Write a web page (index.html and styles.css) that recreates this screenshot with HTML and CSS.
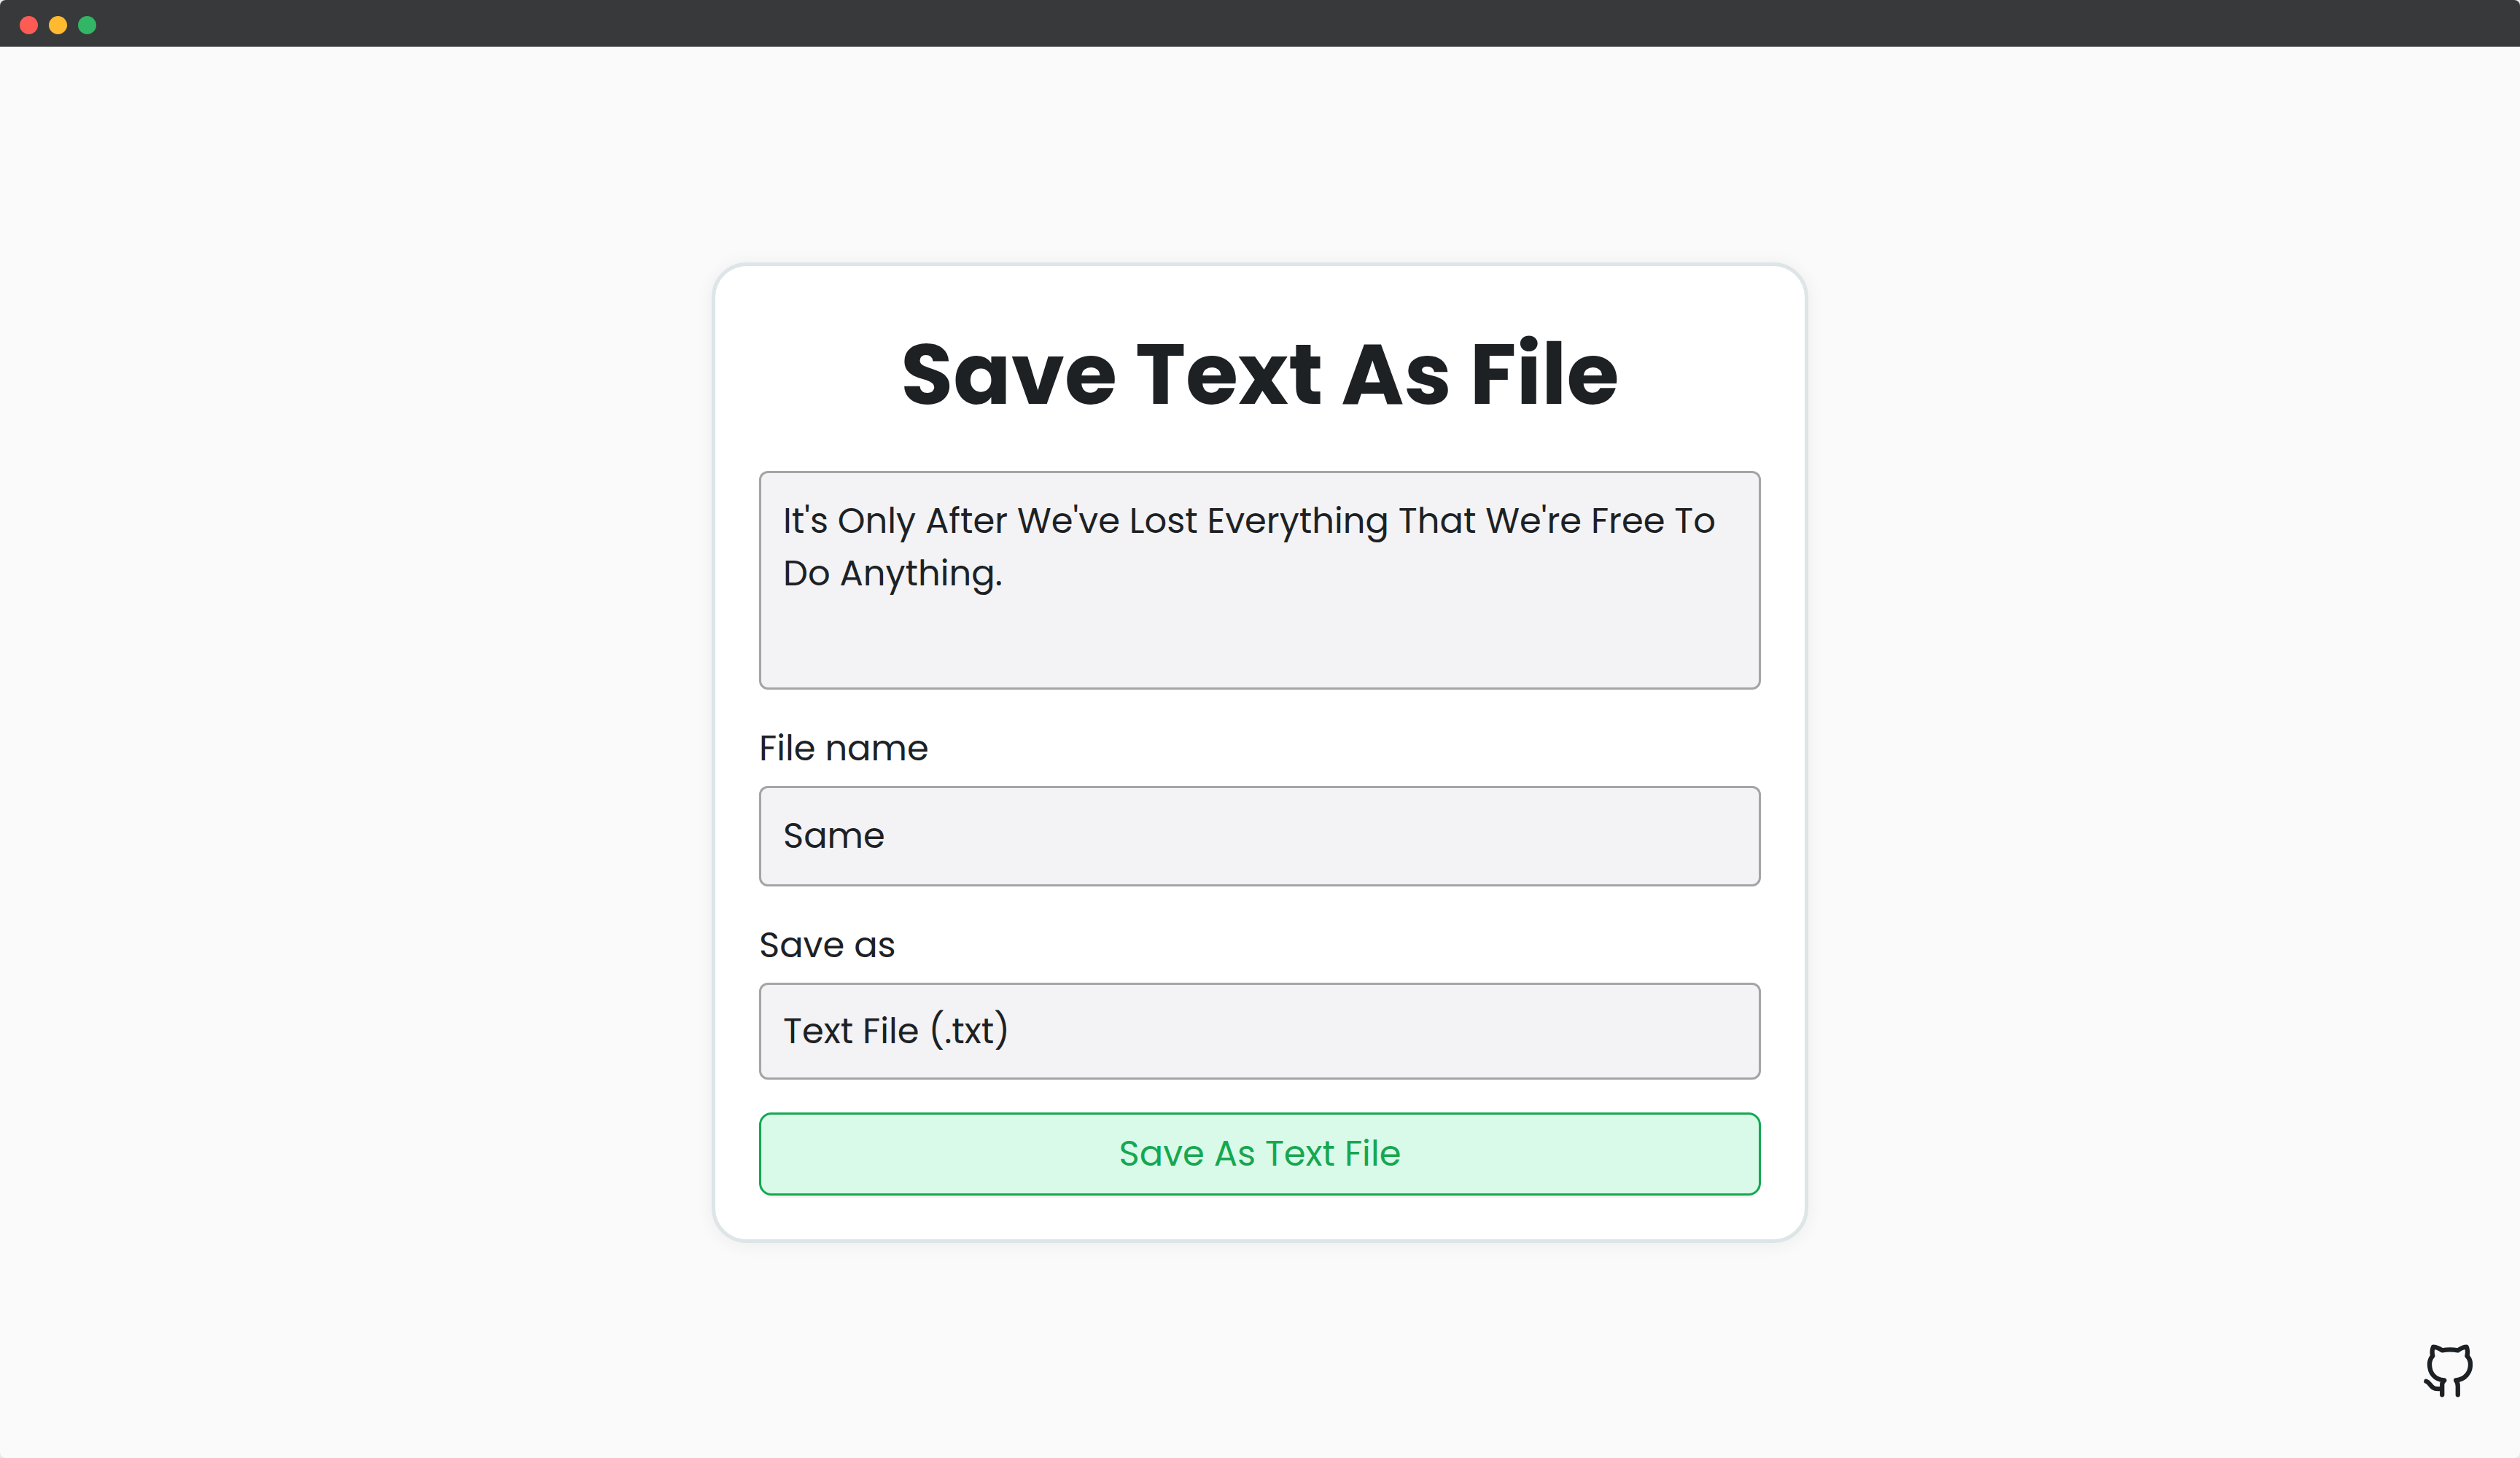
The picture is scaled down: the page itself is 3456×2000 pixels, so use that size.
FILE: index.html
```html
<!DOCTYPE html>
<html lang="en">
<head>
<meta charset="utf-8">
<title>Save Text As File</title>
<link rel="stylesheet" href="styles.css">
</head>
<body>
<div class="window">
  <header class="titlebar">
    <span class="dot dot-close"></span>
    <span class="dot dot-minimize"></span>
    <span class="dot dot-zoom"></span>
  </header>
  <main class="stage">
    <form class="card">
      <h1 class="title">Save Text As File</h1>
      <textarea class="control text-area" aria-label="Text to save" spellcheck="false">It's Only After We've Lost Everything That We're Free To Do Anything.</textarea>
      <div class="field">
        <label class="label" for="file-name">File name</label>
        <input class="control name-input" id="file-name" type="text" value="Same" spellcheck="false">
      </div>
      <div class="field">
        <label class="label" for="file-type">Save as</label>
        <select class="control type-select" id="file-type">
          <option>Text File (.txt)</option>
        </select>
      </div>
      <button class="save" type="button">Save As Text File</button>
    </form>
    <a class="github" href="#" aria-label="GitHub">
      <svg class="github-icon" viewBox="204 133 202 218" aria-hidden="true">
        <path d="M214 285C232 290 232 317 263 316H280M280 341V298C280 291 284 285 289 281C248 278 228 250 228 215C228 200 233 189 241 180C238 168 238 155 243 143C252 143 262 146 280 157Q312 151 345 157C362 146 372 143 381 143C386 155 386 168 383 180C392 189 397 200 397 215C397 250 375 277 337 281C343 288 345 294 345 305V341"/>
      </svg>
    </a>
  </main>
</div>
</body>
</html>
```

FILE: styles.css
```css
* {
  box-sizing: border-box;
}

body {
  margin: 0;
  background: #e6eaea;
  color: #1d2124;
  font-family: Poppins, Inter, sans-serif;
  font-size: 48px;
  line-height: 72px;
}

.window {
  display: flex;
  flex-direction: column;
  min-height: 100vh;
  overflow: hidden;
  border-radius: 8px;
  background: #fafafa;
}

.titlebar {
  display: flex;
  align-items: center;
  gap: 15px;
  height: 64px;
  padding: 4px 27px 0;
  background: #38393b;
}

.dot {
  width: 25px;
  height: 25px;
  border-radius: 50%;
}

.dot-close {
  background: #ff5b55;
}

.dot-minimize {
  background: #ffba30;
}

.dot-zoom {
  background: #32b565;
}

.stage {
  position: relative;
  display: flex;
  flex: 1;
  align-items: center;
  justify-content: center;
}

.card {
  display: flex;
  flex-direction: column;
  width: 100%;
  max-width: 1504px;
  padding: 60px;
  border: 5px solid #dde5e7;
  border-radius: 48px;
  background: #fff;
  box-shadow: 0 2px 24px rgba(0, 0, 0, 0.06);
}

.title {
  margin: 0 0 45px;
  font-size: 117px;
  font-weight: 700;
  line-height: 176px;
  text-align: center;
}

.field {
  display: flex;
  flex-direction: column;
  gap: 15px;
  margin-bottom: 45px;
}

.control {
  display: block;
  width: 100%;
  margin: 0;
  padding: 30px;
  border: 3px solid #a5a5a7;
  border-radius: 12px;
  outline: 0;
  background: #f3f3f5;
  color: inherit;
  font: inherit;
}

.text-area {
  height: 300px;
  margin-bottom: 45px;
  resize: none;
  overflow: hidden;
}

.name-input {
  height: 138px;
}

.type-select {
  height: 133px;
  padding: 28px 30px 30px;
  appearance: none;
}

.save {
  height: 114px;
  padding: 0 30px;
  border: 3px solid #16a751;
  border-radius: 17px;
  background: #dafae9;
  box-shadow: 0 3px 0 #f5f5f5;
  color: #16a751;
  font: inherit;
}

.github {
  position: absolute;
  right: 65px;
  bottom: 83px;
  color: inherit;
}

.github-icon {
  display: block;
  width: 67px;
  height: 73px;
  fill: none;
  stroke: currentColor;
  stroke-width: 19;
  stroke-linecap: round;
  stroke-linejoin: round;
}
```
